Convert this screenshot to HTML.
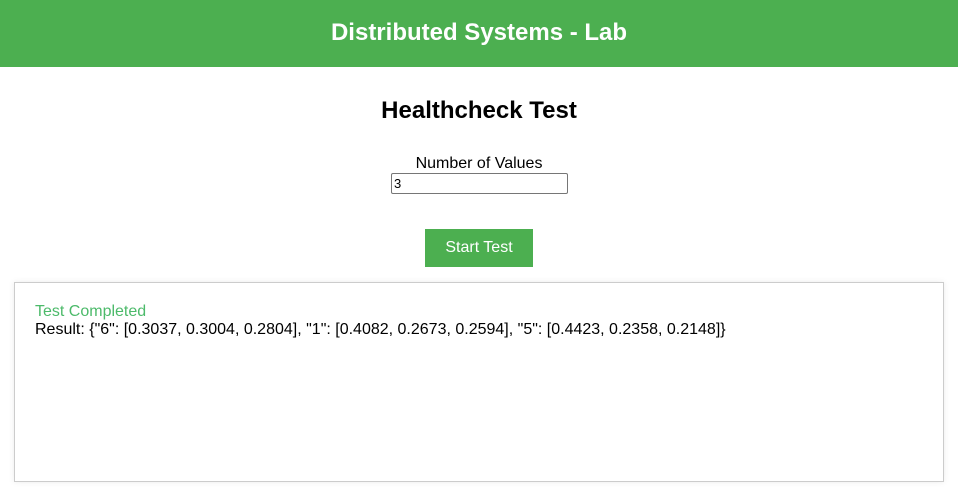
<!DOCTYPE html>
<html><head><style>
body{margin:0;font-family:"Liberation Sans",Arial,sans-serif;background:#fff;width:958px;height:499px;overflow:hidden;position:relative}
.hdr{position:absolute;left:0;top:0;width:958px;height:67px;background:#4caf50;color:#fff;font-weight:bold;font-size:24px;text-align:center;line-height:66px}
h2{position:absolute;top:97px;left:0;width:958px;text-align:center;margin:0;font-size:24px;line-height:28px}
.lbl{position:absolute;top:155px;left:0;width:958px;text-align:center;font-size:16px;line-height:18px}
.inp{position:absolute;left:391px;top:173px;border:1px solid #767676;border-radius:2px;font-size:13px;line-height:19px;box-sizing:border-box;padding-left:2px;height:21px;width:177px}
.btn{position:absolute;left:425px;top:229px;width:108px;height:38px;background:#4caf50;color:#fff;font-size:16px;text-align:center;line-height:37px}
.box{position:absolute;left:14px;top:282px;width:928px;height:198px;border:1px solid #ccc;box-shadow:0 0 6px rgba(0,0,0,.08)}
.t1{position:absolute;left:20px;top:20px;color:#4cba6a;font-size:16px;line-height:18px}
.t2{position:absolute;left:20px;top:38px;font-size:16px;line-height:18px;white-space:nowrap}
</style></head><body>
<div class="hdr">Distributed Systems - Lab</div>
<h2>Healthcheck Test</h2>
<div class="lbl">Number of Values</div>
<div class="inp">3</div>
<div class="btn">Start Test</div>
<div class="box"><div class="t1">Test Completed</div><div class="t2">Result: {"6": [0.3037, 0.3004, 0.2804], "1": [0.4082, 0.2673, 0.2594], "5": [0.4423, 0.2358, 0.2148]}</div></div>
</body></html>
